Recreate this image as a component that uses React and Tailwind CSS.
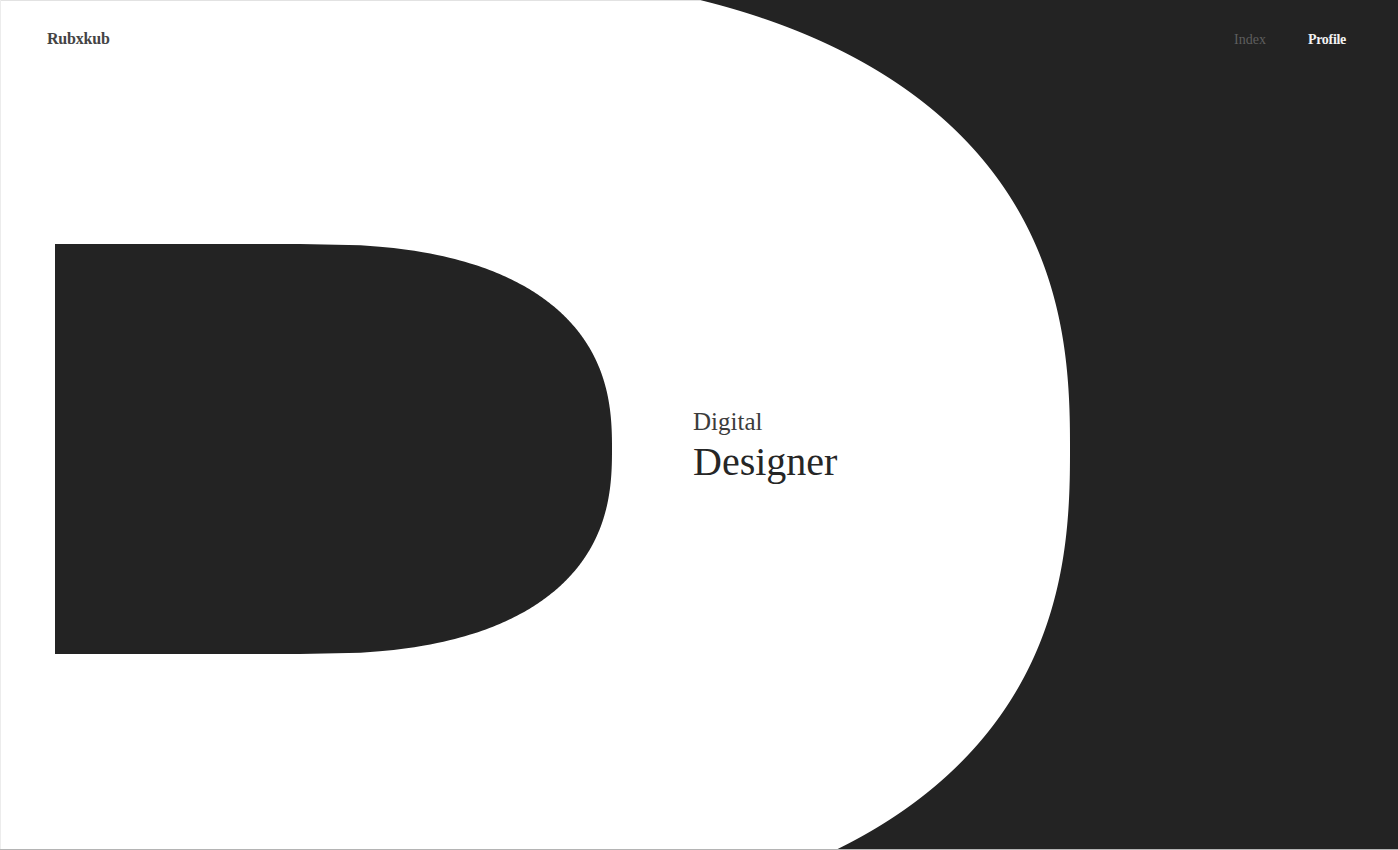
import React from "react";

function superPts(cx, cy, a, b, n, steps) {
  const pts = [];
  for (let i = 0; i <= steps; i++) {
    const dy = -b + (2 * b * i) / steps;
    const t = Math.min(1, Math.pow(Math.abs(dy) / b, n));
    const x = cx + a * Math.pow(1 - t, 1 / n);
    pts.push([x, cy + dy]);
  }
  return pts;
}

function toPath(pts) {
  return pts.map((p) => `${p[0].toFixed(2)},${p[1].toFixed(2)}`).join(" L ");
}

function BigD() {
  const outer = superPts(368, 449, 702, 480, 2.5, 480);
  const inner = superPts(300, 449, 312, 205, 2.5, 300);
  const outerD = `M 0,${449 - 480} L ${toPath(outer)} L 0,${449 + 480} Z`;
  const innerD = `M 55,244 L ${toPath(inner)} L 55,654 Z`;
  return (
    <svg
      className="absolute inset-0"
      width="1398"
      height="850"
      viewBox="0 0 1398 850"
      aria-hidden="true"
    >
      <path d={outerD} fill="#ffffff" />
      <path d={innerD} fill="#232323" />
      <line x1="0" y1="0.5" x2="700" y2="0.5" stroke="#e2e2e2" strokeWidth="1" />
      <line x1="0.5" y1="0" x2="0.5" y2="850" stroke="#ececec" strokeWidth="1" />
      <line x1="0" y1="849.5" x2="1398" y2="849.5" stroke="#b4b4b4" strokeWidth="1" />
    </svg>
  );
}

export default function App() {
  return (
    <div
      className="relative w-[1398px] h-[850px] overflow-hidden bg-[#232323]"
      style={{ fontFamily: '"Liberation Serif", "DejaVu Serif", serif' }}
    >
      <BigD />
      <div className="relative flex flex-col h-full">
        <header className="flex items-center justify-between pl-[47px] pr-[52px] pt-[27px]">
          <a className="text-[16px] leading-[22px] font-semibold text-[#444444] tracking-[-0.2px]">
            Rubxkub
          </a>
          <nav className="flex items-center gap-[42px] text-[14px] leading-[22px] pt-[2px]">
            <a className="text-[#5e5e5e]">Index</a>
            <a className="text-[#f2f2f2] font-semibold tracking-[-0.3px]">Profile</a>
          </nav>
        </header>
        <section className="ml-[693px] mt-[358px] flex flex-col">
          <span className="text-[25px] leading-[25px] text-[#3c3c3c]">Digital</span>
          <span className="text-[40px] leading-[40px] mt-[8px] text-[#262626]">Designer</span>
        </section>
      </div>
    </div>
  );
}
